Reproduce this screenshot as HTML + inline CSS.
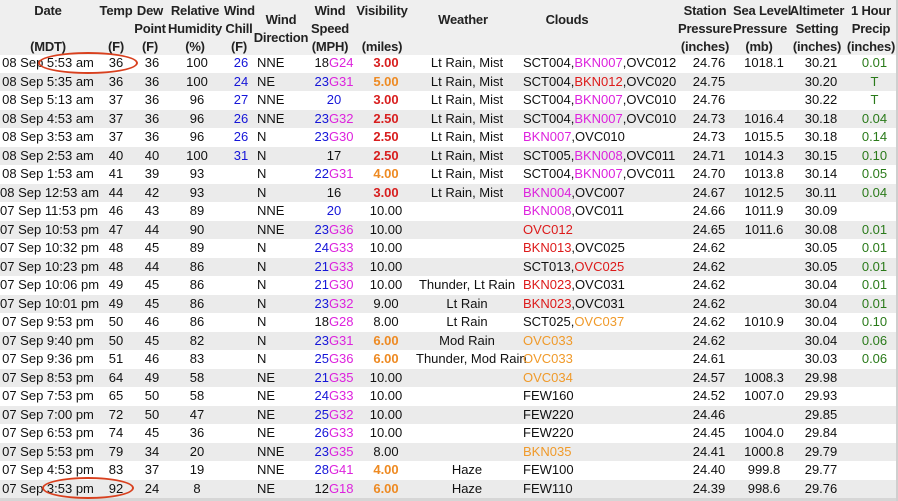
<!DOCTYPE html>
<html><head><meta charset="utf-8"><style>
body{margin:0;width:898px;height:501px;overflow:hidden;background:#fff;font-family:"Liberation Sans",Arial,sans-serif;font-size:13px;color:#111;position:relative}
.hd{position:absolute;left:0;top:0;width:896px;height:55px;background:#efefef}
.h{position:absolute;font-weight:bold;text-align:center;line-height:18px;white-space:nowrap;color:#222;letter-spacing:-0.2px}
.r{position:absolute;left:0;width:896px;height:18.5px;display:flex;line-height:18.5px;white-space:nowrap}
.r.g{background:#ebebeb}
.r span{display:block;flex:none;text-align:center;overflow:visible}
.c1{width:96px}.c2{width:40px}.c3{width:32px}.c4{width:58px}.c5{width:30px}
.c6{width:56px;text-align:left!important;padding-left:1px;box-sizing:border-box}
.c7{width:44px}.c8{width:60px}.c9{width:102px}
.c10{width:162px;text-align:left!important;padding-left:5px;box-sizing:border-box}
.c11{width:58px}.c12{width:52px}.c13{width:62px}.c14{width:45px}
.b{color:#1515d8}.m{color:#dd22dd}.rd{color:#dd1a1a}.o{color:#f09a2a}
.vr{color:#d81e1e;font-weight:bold}.vo{color:#ee8a22;font-weight:bold}.gr{color:#2a7a1a}
.ell{position:absolute;border:2px solid #d8401e;border-radius:50%}
</style></head><body>
<div class="hd"></div>
<div class="h" style="left:0;width:96px;top:2px">Date</div>
<div class="h" style="left:0;width:96px;top:38px">(MDT)</div>
<div class="h" style="left:96px;width:40px;top:2px">Temp<br><br>(F)</div>
<div class="h" style="left:134px;width:32px;top:2px">Dew<br>Point<br>(F)</div>
<div class="h" style="left:166px;width:58px;top:2px">Relative<br>Humidity<br>(%)</div>
<div class="h" style="left:224px;width:30px;top:2px">Wind<br>Chill<br>(F)</div>
<div class="h" style="left:252px;width:58px;top:11px">Wind<br>Direction</div>
<div class="h" style="left:308px;width:44px;top:2px">Wind<br>Speed<br>(MPH)</div>
<div class="h" style="left:352px;width:60px;top:2px">Visibility<br><br>(miles)</div>
<div class="h" style="left:412px;width:102px;top:11px">Weather</div>
<div class="h" style="left:514px;width:106px;top:11px">Clouds</div>
<div class="h" style="left:676px;width:58px;top:2px">Station<br>Pressure<br>(inches)</div>
<div class="h" style="left:733px;width:52px;top:2px">Sea Level<br>Pressure<br>(mb)</div>
<div class="h" style="left:786px;width:62px;top:2px">Altimeter<br>Setting<br>(inches)</div>
<div class="h" style="left:846px;width:50px;top:2px">1 Hour<br>Precip<br>(inches)</div>

<div class="r" style="top:54px"><span class="c1">08 Sep 5:53 am</span><span class="c2">36</span><span class="c3">36</span><span class="c4">100</span><span class="c5 b">26</span><span class="c6">NNE</span><span class="c7">18<font class="m">G24</font></span><span class="c8 vr">3.00</span><span class="c9">Lt Rain, Mist</span><span class="c10">SCT004,<font class="m">BKN007</font>,OVC012</span><span class="c11">24.76</span><span class="c12">1018.1</span><span class="c13">30.21</span><span class="c14 gr">0.01</span></div>
<div class="r g" style="top:72.5px"><span class="c1">08 Sep 5:35 am</span><span class="c2">36</span><span class="c3">36</span><span class="c4">100</span><span class="c5 b">24</span><span class="c6">NE</span><span class="c7"><font class="b">23</font><font class="m">G31</font></span><span class="c8 vo">5.00</span><span class="c9">Lt Rain, Mist</span><span class="c10">SCT004,<font class="rd">BKN012</font>,OVC020</span><span class="c11">24.75</span><span class="c12"></span><span class="c13">30.20</span><span class="c14 gr">T</span></div>
<div class="r" style="top:91px"><span class="c1">08 Sep 5:13 am</span><span class="c2">37</span><span class="c3">36</span><span class="c4">96</span><span class="c5 b">27</span><span class="c6">NNE</span><span class="c7 b">20</span><span class="c8 vr">3.00</span><span class="c9">Lt Rain, Mist</span><span class="c10">SCT004,<font class="m">BKN007</font>,OVC010</span><span class="c11">24.76</span><span class="c12"></span><span class="c13">30.22</span><span class="c14 gr">T</span></div>
<div class="r g" style="top:109.5px"><span class="c1">08 Sep 4:53 am</span><span class="c2">37</span><span class="c3">36</span><span class="c4">96</span><span class="c5 b">26</span><span class="c6">NNE</span><span class="c7"><font class="b">23</font><font class="m">G32</font></span><span class="c8 vr">2.50</span><span class="c9">Lt Rain, Mist</span><span class="c10">SCT004,<font class="m">BKN007</font>,OVC010</span><span class="c11">24.73</span><span class="c12">1016.4</span><span class="c13">30.18</span><span class="c14 gr">0.04</span></div>
<div class="r" style="top:128px"><span class="c1">08 Sep 3:53 am</span><span class="c2">37</span><span class="c3">36</span><span class="c4">96</span><span class="c5 b">26</span><span class="c6">N</span><span class="c7"><font class="b">23</font><font class="m">G30</font></span><span class="c8 vr">2.50</span><span class="c9">Lt Rain, Mist</span><span class="c10"><font class="m">BKN007</font>,OVC010</span><span class="c11">24.73</span><span class="c12">1015.5</span><span class="c13">30.18</span><span class="c14 gr">0.14</span></div>
<div class="r g" style="top:146.5px"><span class="c1">08 Sep 2:53 am</span><span class="c2">40</span><span class="c3">40</span><span class="c4">100</span><span class="c5 b">31</span><span class="c6">N</span><span class="c7">17</span><span class="c8 vr">2.50</span><span class="c9">Lt Rain, Mist</span><span class="c10">SCT005,<font class="m">BKN008</font>,OVC011</span><span class="c11">24.71</span><span class="c12">1014.3</span><span class="c13">30.15</span><span class="c14 gr">0.10</span></div>
<div class="r" style="top:165px"><span class="c1">08 Sep 1:53 am</span><span class="c2">41</span><span class="c3">39</span><span class="c4">93</span><span class="c5"></span><span class="c6">N</span><span class="c7"><font class="b">22</font><font class="m">G31</font></span><span class="c8 vo">4.00</span><span class="c9">Lt Rain, Mist</span><span class="c10">SCT004,<font class="m">BKN007</font>,OVC011</span><span class="c11">24.70</span><span class="c12">1013.8</span><span class="c13">30.14</span><span class="c14 gr">0.05</span></div>
<div class="r g" style="top:183.5px"><span class="c1">08 Sep 12:53 am</span><span class="c2">44</span><span class="c3">42</span><span class="c4">93</span><span class="c5"></span><span class="c6">N</span><span class="c7">16</span><span class="c8 vr">3.00</span><span class="c9">Lt Rain, Mist</span><span class="c10"><font class="m">BKN004</font>,OVC007</span><span class="c11">24.67</span><span class="c12">1012.5</span><span class="c13">30.11</span><span class="c14 gr">0.04</span></div>
<div class="r" style="top:202px"><span class="c1">07 Sep 11:53 pm</span><span class="c2">46</span><span class="c3">43</span><span class="c4">89</span><span class="c5"></span><span class="c6">NNE</span><span class="c7 b">20</span><span class="c8">10.00</span><span class="c9"></span><span class="c10"><font class="m">BKN008</font>,OVC011</span><span class="c11">24.66</span><span class="c12">1011.9</span><span class="c13">30.09</span><span class="c14"></span></div>
<div class="r g" style="top:220.5px"><span class="c1">07 Sep 10:53 pm</span><span class="c2">47</span><span class="c3">44</span><span class="c4">90</span><span class="c5"></span><span class="c6">NNE</span><span class="c7"><font class="b">23</font><font class="m">G36</font></span><span class="c8">10.00</span><span class="c9"></span><span class="c10"><font class="rd">OVC012</font></span><span class="c11">24.65</span><span class="c12">1011.6</span><span class="c13">30.08</span><span class="c14 gr">0.01</span></div>
<div class="r" style="top:239px"><span class="c1">07 Sep 10:32 pm</span><span class="c2">48</span><span class="c3">45</span><span class="c4">89</span><span class="c5"></span><span class="c6">N</span><span class="c7"><font class="b">24</font><font class="m">G33</font></span><span class="c8">10.00</span><span class="c9"></span><span class="c10"><font class="rd">BKN013</font>,OVC025</span><span class="c11">24.62</span><span class="c12"></span><span class="c13">30.05</span><span class="c14 gr">0.01</span></div>
<div class="r g" style="top:257.5px"><span class="c1">07 Sep 10:23 pm</span><span class="c2">48</span><span class="c3">44</span><span class="c4">86</span><span class="c5"></span><span class="c6">N</span><span class="c7"><font class="b">21</font><font class="m">G33</font></span><span class="c8">10.00</span><span class="c9"></span><span class="c10">SCT013,<font class="rd">OVC025</font></span><span class="c11">24.62</span><span class="c12"></span><span class="c13">30.05</span><span class="c14 gr">0.01</span></div>
<div class="r" style="top:276px"><span class="c1">07 Sep 10:06 pm</span><span class="c2">49</span><span class="c3">45</span><span class="c4">86</span><span class="c5"></span><span class="c6">N</span><span class="c7"><font class="b">21</font><font class="m">G30</font></span><span class="c8">10.00</span><span class="c9">Thunder, Lt Rain</span><span class="c10"><font class="rd">BKN023</font>,OVC031</span><span class="c11">24.62</span><span class="c12"></span><span class="c13">30.04</span><span class="c14 gr">0.01</span></div>
<div class="r g" style="top:294.5px"><span class="c1">07 Sep 10:01 pm</span><span class="c2">49</span><span class="c3">45</span><span class="c4">86</span><span class="c5"></span><span class="c6">N</span><span class="c7"><font class="b">23</font><font class="m">G32</font></span><span class="c8">9.00</span><span class="c9">Lt Rain</span><span class="c10"><font class="rd">BKN023</font>,OVC031</span><span class="c11">24.62</span><span class="c12"></span><span class="c13">30.04</span><span class="c14 gr">0.01</span></div>
<div class="r" style="top:313px"><span class="c1">07 Sep 9:53 pm</span><span class="c2">50</span><span class="c3">46</span><span class="c4">86</span><span class="c5"></span><span class="c6">N</span><span class="c7">18<font class="m">G28</font></span><span class="c8">8.00</span><span class="c9">Lt Rain</span><span class="c10">SCT025,<font class="o">OVC037</font></span><span class="c11">24.62</span><span class="c12">1010.9</span><span class="c13">30.04</span><span class="c14 gr">0.10</span></div>
<div class="r g" style="top:331.5px"><span class="c1">07 Sep 9:40 pm</span><span class="c2">50</span><span class="c3">45</span><span class="c4">82</span><span class="c5"></span><span class="c6">N</span><span class="c7"><font class="b">23</font><font class="m">G31</font></span><span class="c8 vo">6.00</span><span class="c9">Mod Rain</span><span class="c10"><font class="o">OVC033</font></span><span class="c11">24.62</span><span class="c12"></span><span class="c13">30.04</span><span class="c14 gr">0.06</span></div>
<div class="r" style="top:350px"><span class="c1">07 Sep 9:36 pm</span><span class="c2">51</span><span class="c3">46</span><span class="c4">83</span><span class="c5"></span><span class="c6">N</span><span class="c7"><font class="b">25</font><font class="m">G36</font></span><span class="c8 vo">6.00</span><span class="c9">Thunder, Mod Rain</span><span class="c10"><font class="o">OVC033</font></span><span class="c11">24.61</span><span class="c12"></span><span class="c13">30.03</span><span class="c14 gr">0.06</span></div>
<div class="r g" style="top:368.5px"><span class="c1">07 Sep 8:53 pm</span><span class="c2">64</span><span class="c3">49</span><span class="c4">58</span><span class="c5"></span><span class="c6">NE</span><span class="c7"><font class="b">21</font><font class="m">G35</font></span><span class="c8">10.00</span><span class="c9"></span><span class="c10"><font class="o">OVC034</font></span><span class="c11">24.57</span><span class="c12">1008.3</span><span class="c13">29.98</span><span class="c14"></span></div>
<div class="r" style="top:387px"><span class="c1">07 Sep 7:53 pm</span><span class="c2">65</span><span class="c3">50</span><span class="c4">58</span><span class="c5"></span><span class="c6">NE</span><span class="c7"><font class="b">24</font><font class="m">G33</font></span><span class="c8">10.00</span><span class="c9"></span><span class="c10">FEW160</span><span class="c11">24.52</span><span class="c12">1007.0</span><span class="c13">29.93</span><span class="c14"></span></div>
<div class="r g" style="top:405.5px"><span class="c1">07 Sep 7:00 pm</span><span class="c2">72</span><span class="c3">50</span><span class="c4">47</span><span class="c5"></span><span class="c6">NE</span><span class="c7"><font class="b">25</font><font class="m">G32</font></span><span class="c8">10.00</span><span class="c9"></span><span class="c10">FEW220</span><span class="c11">24.46</span><span class="c12"></span><span class="c13">29.85</span><span class="c14"></span></div>
<div class="r" style="top:424px"><span class="c1">07 Sep 6:53 pm</span><span class="c2">74</span><span class="c3">45</span><span class="c4">36</span><span class="c5"></span><span class="c6">NE</span><span class="c7"><font class="b">26</font><font class="m">G33</font></span><span class="c8">10.00</span><span class="c9"></span><span class="c10">FEW220</span><span class="c11">24.45</span><span class="c12">1004.0</span><span class="c13">29.84</span><span class="c14"></span></div>
<div class="r g" style="top:442.5px"><span class="c1">07 Sep 5:53 pm</span><span class="c2">79</span><span class="c3">34</span><span class="c4">20</span><span class="c5"></span><span class="c6">NNE</span><span class="c7"><font class="b">23</font><font class="m">G35</font></span><span class="c8">8.00</span><span class="c9"></span><span class="c10"><font class="o">BKN035</font></span><span class="c11">24.41</span><span class="c12">1000.8</span><span class="c13">29.79</span><span class="c14"></span></div>
<div class="r" style="top:461px"><span class="c1">07 Sep 4:53 pm</span><span class="c2">83</span><span class="c3">37</span><span class="c4">19</span><span class="c5"></span><span class="c6">NNE</span><span class="c7"><font class="b">28</font><font class="m">G41</font></span><span class="c8 vo">4.00</span><span class="c9">Haze</span><span class="c10">FEW100</span><span class="c11">24.40</span><span class="c12">999.8</span><span class="c13">29.77</span><span class="c14"></span></div>
<div class="r g" style="top:479.5px"><span class="c1">07 Sep 3:53 pm</span><span class="c2">92</span><span class="c3">24</span><span class="c4">8</span><span class="c5"></span><span class="c6">NE</span><span class="c7">12<font class="m">G18</font></span><span class="c8 vo">6.00</span><span class="c9">Haze</span><span class="c10">FEW110</span><span class="c11">24.39</span><span class="c12">998.6</span><span class="c13">29.76</span><span class="c14"></span></div>

<div style="position:absolute;left:0;top:498px;width:898px;height:3px;background:#d6d6d6"></div>
<div style="position:absolute;left:896px;top:0;width:2px;height:501px;background:#cfcfcf"></div>
<div class="ell" style="left:38px;top:52px;width:96px;height:18px"></div>
<div class="ell" style="left:42px;top:477px;width:88px;height:18px"></div>
</body></html>
